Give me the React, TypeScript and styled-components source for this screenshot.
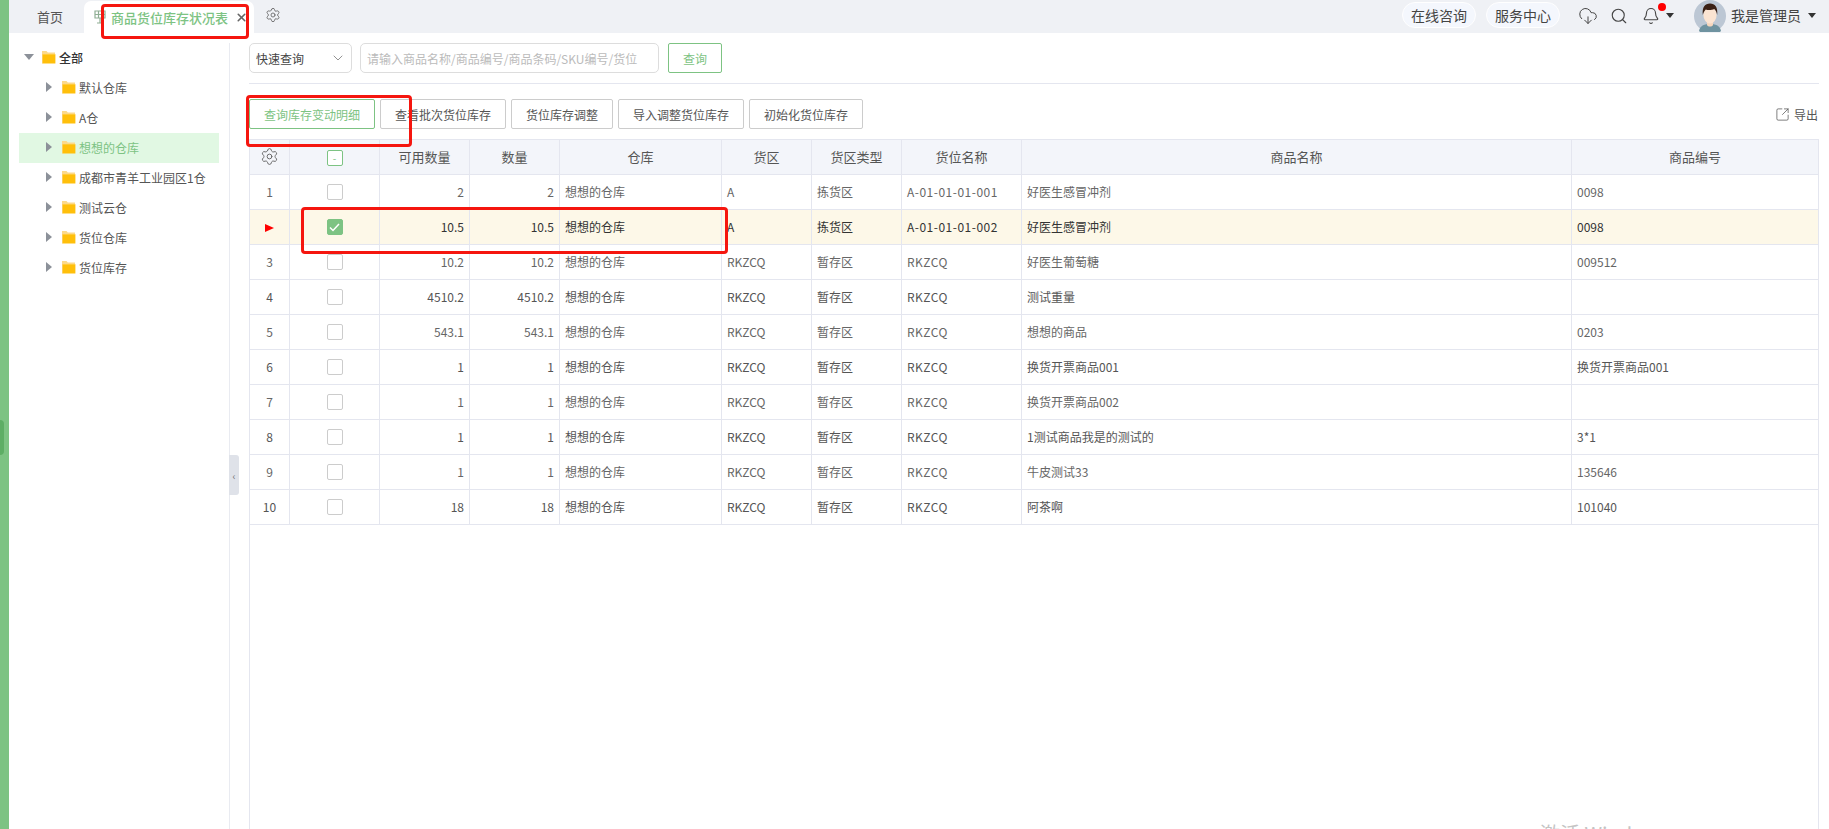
import React from "react";
import styled, { createGlobalStyle } from "styled-components";
import { Bell, ChevronDown, CloudDownload, Search, Settings, SquareArrowOutUpRight, X } from "lucide-react";

const GlobalStyle = createGlobalStyle`
  html, body { margin: 0; padding: 0; background: #fff; }
  body { font-family: "Noto Sans CJK SC", "Noto Sans", sans-serif; font-size: 12px; color: #555; }
  * { box-sizing: border-box; }
`;

const Frame = styled.div`
  position: relative;
  display: flex;
  width: 1829px;
  height: 829px;
  overflow: hidden;
`;

const Rail = styled.div`
  position: relative;
  flex: 0 0 9px;
  background: #7dc383;
`;

const RailHandle = styled.div`
  position: absolute;
  left: 0;
  top: 420px;
  width: 4px;
  height: 35px;
  background: #5eae65;
  border-radius: 0 4px 4px 0;
`;

const Main = styled.div`
  flex: 1;
  display: flex;
  flex-direction: column;
  min-width: 0;
`;

const TopBar = styled.div`
  flex: 0 0 33px;
  display: flex;
  align-items: center;
  background: #eff1f5;
`;

const HomeTab = styled.div`
  width: 75px;
  padding-left: 28px;
  padding-bottom: 1px;
  font-size: 13px;
  color: #555;
`;

const ActiveTab = styled.div`
  align-self: flex-end;
  width: 170px;
  height: 32px;
  display: flex;
  align-items: center;
  padding-left: 10px;
  background: #fff;
  border-radius: 7px 7px 0 0;
  color: #7dc383;
  font-size: 13px;
  font-weight: 500;
`;

const TabTitle = styled.span`
  margin-left: 5px;
  white-space: nowrap;
`;

const TabClose = styled(X)`
  margin-left: 7px;
  color: #666;
`;

const TabSetting = styled(Settings)`
  margin-left: 11px;
  margin-top: -3px;
  color: #666;
`;

const TopActions = styled.div`
  margin-left: auto;
  display: flex;
  align-items: center;
  height: 100%;
  padding-right: 13px;
`;

const Pill = styled.div`
  width: 74px;
  height: 26px;
  margin-right: 10px;
  margin-top: -3px;
  padding-bottom: 1px;
  display: flex;
  align-items: center;
  justify-content: center;
  background: #f4f7fd;
  border: 1px solid #fff;
  border-radius: 13px;
  font-size: 14px;
  color: #444;
`;

const ToolIcon = styled.div`
  display: flex;
  margin-left: ${(p: { $gap: number }) => p.$gap}px;
  margin-top: -2px;
  color: #444;
`;

const BellBox = styled.div`
  position: relative;
  display: flex;
  margin-left: 14px;
  margin-top: -2px;
  color: #444;
`;

const RedDot = styled.span`
  position: absolute;
  left: 16px;
  top: -4px;
  width: 8px;
  height: 8px;
  border-radius: 50%;
  background: #f00;
`;

const Caret = styled.span`
  width: 0;
  height: 0;
  margin-top: -3px;
  border-left: 4px solid transparent;
  border-right: 4px solid transparent;
  border-top: 5px solid #333;
`;

const BellCaret = styled(Caret)`
  margin-left: 6px;
`;

const AvatarBox = styled.div`
  display: flex;
  margin-left: 20px;
  margin-top: -2px;
`;

const UserName = styled.span`
  margin-left: 5px;
  margin-right: 7px;
  margin-top: -3px;
  font-size: 14px;
  color: #444;
  white-space: nowrap;
`;

const Body = styled.div`
  flex: 1;
  display: flex;
  min-height: 0;
`;

const Sidebar = styled.div`
  position: relative;
  flex: 0 0 221px;
  margin-top: 10px;
  padding: 0 10px;
  border-right: 1px solid #e9ebf1;
`;

const TreeRow = styled.div<{ $active?: boolean; $root?: boolean }>`
  height: 30px;
  display: flex;
  align-items: center;
  padding-left: ${(p) => (p.$root ? 5 : 27)}px;
  padding-bottom: 2px;
  background: ${(p) => (p.$active ? "#e1f8e3" : "transparent")};
  color: ${(p) => (p.$active ? "#7dc383" : p.$root ? "#333" : "#555")};
  font-weight: ${(p) => (p.$root ? 500 : 400)};
  white-space: nowrap;
`;

const ArrowRight = styled.span`
  width: 0;
  height: 0;
  border-top: 5px solid transparent;
  border-bottom: 5px solid transparent;
  border-left: 6px solid #8c9199;
  margin-right: 9px;
`;

const ArrowDown = styled.span`
  width: 0;
  height: 0;
  border-left: 5px solid transparent;
  border-right: 5px solid transparent;
  border-top: 6px solid #8c9199;
  margin-right: 7px;
`;

const TreeLabel = styled.span`
  margin-left: 3px;
`;

const Collapse = styled.div`
  position: absolute;
  left: 220px;
  top: 412px;
  width: 10px;
  height: 40px;
  display: flex;
  align-items: center;
  justify-content: center;
  background: #dfe2e9;
  border-radius: 0 3px 3px 0;
  font-size: 10px;
  color: #777;
`;

const Content = styled.div`
  flex: 1;
  min-width: 0;
  display: flex;
  flex-direction: column;
  padding: 10px 10px 0 19px;
`;

const SearchRow = styled.div`
  display: flex;
  align-items: center;
  padding-bottom: 10px;
  border-bottom: 1px solid #e4e6ef;
`;

const SelectBox = styled.div`
  width: 103px;
  height: 30px;
  display: flex;
  align-items: center;
  justify-content: space-between;
  padding: 0 5px 0 6px;
  border: 1px solid #ddd;
  border-radius: 5px;
  color: #444;
`;

const SelectIcon = styled(ChevronDown)`
  color: #777;
`;

const SearchInput = styled.div`
  width: 299px;
  height: 30px;
  margin-left: 8px;
  display: flex;
  align-items: center;
  padding-left: 6px;
  border: 1px solid #ddd;
  border-radius: 5px;
  color: #bbb;
  white-space: nowrap;
`;

const Button = styled.div<{ $active?: boolean }>`
  height: 30px;
  display: flex;
  align-items: center;
  justify-content: center;
  border: 1px solid ${(p) => (p.$active ? "#7dc383" : "#ccc")};
  border-radius: 2px;
  color: ${(p) => (p.$active ? "#7dc383" : "#555")};
  white-space: nowrap;
`;

const SearchButton = styled(Button)`
  width: 54px;
  margin-left: 9px;
`;

const ActionRow = styled.div`
  display: flex;
  align-items: center;
  gap: 5px;
  margin-top: 15px;
  margin-bottom: 10px;
`;

const ActionButton = styled(Button)`
  padding: 0 14px;
`;

const ExportLink = styled.div`
  margin-left: auto;
  display: flex;
  align-items: center;
  gap: 4px;
  margin-right: 1px;
  color: #555;
`;

const TableWrap = styled.div`
  flex: 1;
  border: 1px solid #e4e6ef;
  border-bottom: none;
`;

const Table = styled.table`
  width: 1568px;
  table-layout: fixed;
  border-collapse: separate;
  border-spacing: 0;
`;

const HeadCell = styled.th`
  height: 35px;
  padding: 0 5px 2px;
  background: #f3f5fa;
  border-right: 1px solid #e4e6ef;
  border-bottom: 1px solid #e4e6ef;
  font-size: 13px;
  font-weight: 400;
  color: #555;
  text-align: center;
  &:last-child { border-right: none; }
`;

const HeadInner = styled.div`
  display: flex;
  justify-content: center;
  align-items: center;
  color: #666;
`;

const Row = styled.tr<{ $selected?: boolean; $dark?: boolean }>`
  background: ${(p) => (p.$selected ? "#fdf8e8" : "#fff")};
  color: ${(p) => (p.$selected ? "#333" : p.$dark ? "#555" : "#666")};
`;

const Cell = styled.td<{ $align?: string }>`
  height: 35px;
  padding: 0 5px 2px;
  border-right: 1px solid #e4e6ef;
  border-bottom: 1px solid #e4e6ef;
  text-align: ${(p) => p.$align || "left"};
  white-space: nowrap;
  &:last-child { border-right: none; }
`;

const CodeText = styled.span`
  letter-spacing: 0.5px;
`;

const Check = styled.span<{ $on?: boolean; $half?: boolean }>`
  display: inline-flex;
  align-items: center;
  justify-content: center;
  width: 16px;
  height: 16px;
  vertical-align: middle;
  border: 1px solid ${(p) => (p.$on || p.$half ? "#7dc383" : "#ccc")};
  border-radius: 2px;
  background: ${(p) => (p.$on ? "#7dc383" : "#fff")};
  color: #7dc383;
  font-size: 10px;
  line-height: 1;
`;

const RowMark = styled.span`
  display: inline-block;
  width: 0;
  height: 0;
  border-top: 4px solid transparent;
  border-bottom: 4px solid transparent;
  border-left: 9px solid #f00;
`;

const RedBox = styled.div<{ $l: number; $t: number; $w: number; $h: number }>`
  position: absolute;
  left: ${(p) => p.$l}px;
  top: ${(p) => p.$t}px;
  width: ${(p) => p.$w}px;
  height: ${(p) => p.$h}px;
  border: 3px solid #f5160f;
  border-radius: 4px;
  pointer-events: none;
`;

const Watermark = styled.div`
  position: absolute;
  left: 1540px;
  top: 820px;
  font-size: 20px;
  line-height: 28px;
  color: #c4c4c4;
  white-space: nowrap;
`;

const FolderIcon = () => (
  <svg width="15" height="14" viewBox="0 0 15 14">
    <path d="M1 1h4.500l1.300 1.600H14v1.500H1z" fill="#fcd98a" />
    <path d="M1 3h1v10.500H1z" fill="#fcd98a" />
    <path d="M1.600 4.200h12.800v9.300H1.600z" fill="#ffbf0a" />
  </svg>
);

const TabIcon = () => (
  <svg width="12" height="14" viewBox="0 0 12 14" fill="none" stroke="#8fae94" strokeWidth="1.2">
    <path d="M1 1h10v7H1z" />
    <path d="M1 4.500h10M4.500 1v7M6 8v5M3 13h6" />
  </svg>
);

const Avatar = () => (
  <svg width="32" height="32" viewBox="0 0 32 32">
    <circle cx="16" cy="16" r="16" fill="#bcc7d4" />
    <path d="M5 31c1-6 6-7 11-7s10 1 11 7a16 16 0 0 1-22 0z" fill="#6f93a0" />
    <path d="M13 20h6v5c-1 2-5 2-6 0z" fill="#f6d6bd" />
    <ellipse cx="16" cy="15" rx="6.600" ry="8.600" fill="#fbe4d2" />
    <path d="M8.800 15C8 7 11 3.500 16 3.500S24 7 23.200 15c-.6-3-1.500-5-3-6-2 1.200-6 1.500-8.400 .6C10.500 11 9.500 12.500 8.800 15z" fill="#3b2115" />
  </svg>
);

type RowData = [string, string, string, string, string, string, string, string];

const rows: RowData[] = [
  ["2", "2", "A", "拣货区", "A-01-01-01-001", "好医生感冒冲剂", "0098", "1"],
  ["10.5", "10.5", "A", "拣货区", "A-01-01-01-002", "好医生感冒冲剂", "0098", "2"],
  ["10.2", "10.2", "RKZCQ", "暂存区", "RKZCQ", "好医生葡萄糖", "009512", "3"],
  ["4510.2", "4510.2", "RKZCQ", "暂存区", "RKZCQ", "测试重量", "", "4"],
  ["543.1", "543.1", "RKZCQ", "暂存区", "RKZCQ", "想想的商品", "0203", "5"],
  ["1", "1", "RKZCQ", "暂存区", "RKZCQ", "换货开票商品001", "换货开票商品001", "6"],
  ["1", "1", "RKZCQ", "暂存区", "RKZCQ", "换货开票商品002", "", "7"],
  ["1", "1", "RKZCQ", "暂存区", "RKZCQ", "1测试商品我是的测试的", "3*1", "8"],
  ["1", "1", "RKZCQ", "暂存区", "RKZCQ", "牛皮测试33", "135646", "9"],
  ["18", "18", "RKZCQ", "暂存区", "RKZCQ", "阿茶啊", "101040", "10"],
];

const treeItems = ["默认仓库", "A仓", "想想的仓库", "成都市青羊工业园区1仓", "测试云仓", "货位仓库", "货位库存"];
const columns = ["可用数量", "数量", "仓库", "货区", "货区类型", "货位名称", "商品名称", "商品编号"];
const colWidths = [40, 90, 90, 90, 162, 90, 90, 120, 550, 246];
const actions = ["查询库存变动明细", "查看批次货位库存", "货位库存调整", "导入调整货位库存", "初始化货位库存"];

export default function App() {
  return (
    <>
      <GlobalStyle />
      <Frame>
        <Rail>
          <RailHandle />
        </Rail>
        <Main>
          <TopBar>
            <HomeTab>首页</HomeTab>
            <ActiveTab>
              <TabIcon />
              <TabTitle>商品货位库存状况表</TabTitle>
              <TabClose size={13} strokeWidth={3} />
            </ActiveTab>
            <TabSetting size={16} strokeWidth={1.3} />
            <TopActions>
              <Pill>在线咨询</Pill>
              <Pill>服务中心</Pill>
              <ToolIcon $gap={8}>
                <CloudDownload size={20} strokeWidth={1.2} />
              </ToolIcon>
              <ToolIcon $gap={12}>
                <Search size={18} strokeWidth={1.5} />
              </ToolIcon>
              <BellBox>
                <Bell size={18} strokeWidth={1.5} />
                <RedDot />
              </BellBox>
              <BellCaret />
              <AvatarBox>
                <Avatar />
              </AvatarBox>
              <UserName>我是管理员</UserName>
              <Caret />
            </TopActions>
          </TopBar>
          <Body>
            <Sidebar>
              <TreeRow $root>
                <ArrowDown />
                <FolderIcon />
                <TreeLabel>全部</TreeLabel>
              </TreeRow>
              {treeItems.map((name, i) => (
                <TreeRow key={name} $active={i === 2}>
                  <ArrowRight />
                  <FolderIcon />
                  <TreeLabel>{name}</TreeLabel>
                </TreeRow>
              ))}
              <Collapse>‹</Collapse>
            </Sidebar>
            <Content>
              <SearchRow>
                <SelectBox>
                  快速查询
                  <SelectIcon size={16} strokeWidth={1.2} />
                </SelectBox>
                <SearchInput>请输入商品名称/商品编号/商品条码/SKU编号/货位</SearchInput>
                <SearchButton $active>查询</SearchButton>
              </SearchRow>
              <ActionRow>
                {actions.map((label, i) => (
                  <ActionButton key={label} $active={i === 0}>
                    {label}
                  </ActionButton>
                ))}
                <ExportLink>
                  <SquareArrowOutUpRight size={15} strokeWidth={1.2} />
                  导出
                </ExportLink>
              </ActionRow>
              <TableWrap>
                <Table>
                  <colgroup>
                    {colWidths.map((w, i) => (
                      <col key={i} width={w} />
                    ))}
                  </colgroup>
                  <thead>
                    <tr>
                      <HeadCell>
                        <HeadInner>
                          <Settings size={19} strokeWidth={1.2} />
                        </HeadInner>
                      </HeadCell>
                      <HeadCell>
                        <Check $half>-</Check>
                      </HeadCell>
                      {columns.map((c) => (
                        <HeadCell key={c}>{c}</HeadCell>
                      ))}
                    </tr>
                  </thead>
                  <tbody>
                    {rows.map((r, i) => {
                      const selected = i === 1;
                      return (
                        <Row key={i} $selected={selected} $dark={i % 2 === 1}>
                          <Cell $align="center">{selected ? <RowMark /> : r[7]}</Cell>
                          <Cell $align="center">
                            <Check $on={selected}>
                              {selected && (
                                <svg width="11" height="9" viewBox="0 0 11 9" fill="none" stroke="#fff" strokeWidth="1.5">
                                  <path d="M1 4.500l3 3L10 1" />
                                </svg>
                              )}
                            </Check>
                          </Cell>
                          <Cell $align="right">{r[0]}</Cell>
                          <Cell $align="right">{r[1]}</Cell>
                          <Cell>想想的仓库</Cell>
                          <Cell>{r[2]}</Cell>
                          <Cell>{r[3]}</Cell>
                          <Cell>
                            <CodeText>{r[4]}</CodeText>
                          </Cell>
                          <Cell>{r[5]}</Cell>
                          <Cell>{r[6]}</Cell>
                        </Row>
                      );
                    })}
                  </tbody>
                </Table>
              </TableWrap>
            </Content>
          </Body>
        </Main>
        <RedBox $l={101} $t={4} $w={148} $h={35} />
        <RedBox $l={246} $t={95} $w={166} $h={52} />
        <RedBox $l={301} $t={207} $w={427} $h={47} />
        <Watermark>激活 Windows</Watermark>
      </Frame>
    </>
  );
}
